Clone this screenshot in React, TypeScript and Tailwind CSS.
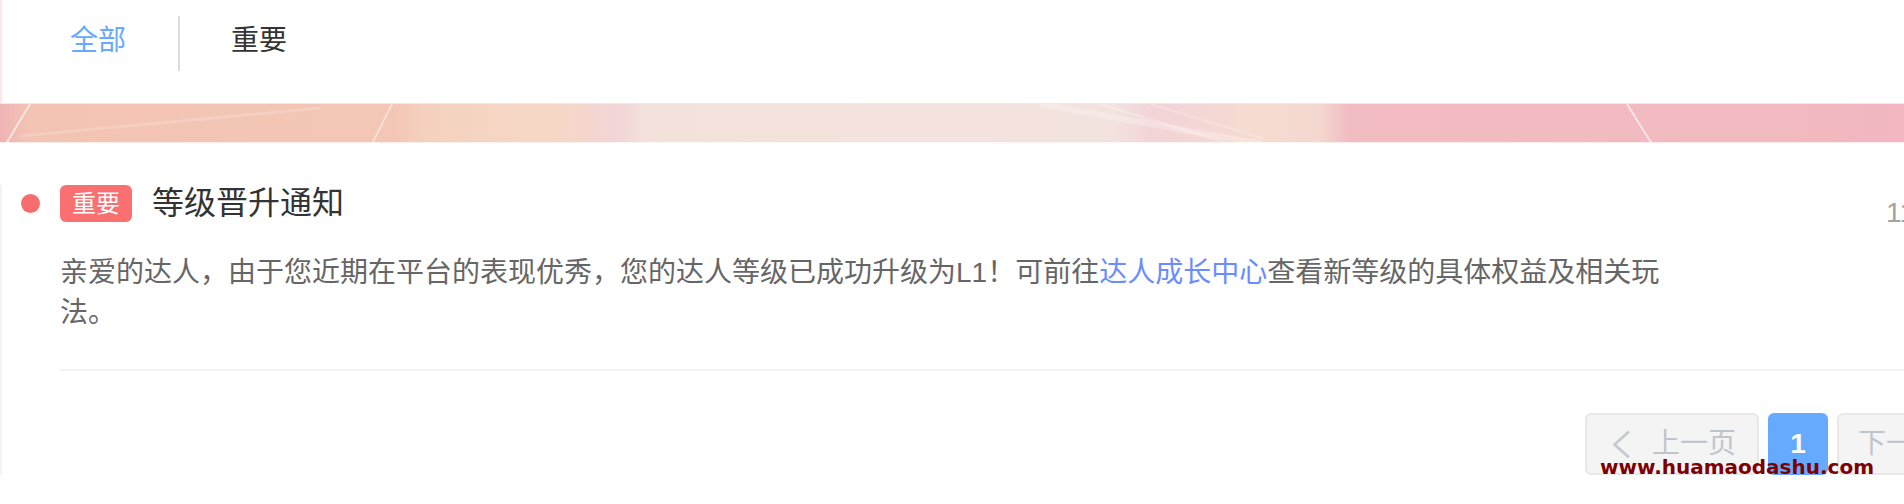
import React from "react";

function Chevron({ dir }: { dir: "left" | "right" }) {
  return (
    <svg width="18" height="27" viewBox="0 0 18 27" fill="none" className="shrink-0">
      {dir === "left" ? (
        <polyline points="16,1.5 2.5,13.5 16,25.5" stroke="#c6c9cf" strokeWidth="3" strokeLinecap="round" strokeLinejoin="round" />
      ) : (
        <polyline points="2,1.5 15.5,13.5 2,25.5" stroke="#c6c9cf" strokeWidth="3" strokeLinecap="round" strokeLinejoin="round" />
      )}
    </svg>
  );
}

function Banner() {
  return (
    <div className="relative h-[40px] w-full overflow-hidden border-t border-[#f9e6e2] bg-[linear-gradient(90deg,#efb4b6_0%,#f3c4b3_1.5%,#f3c6b5_19%,#f5d2c0_21%,#f6d7c6_27%,#f2d6d8_30%,#f3e2dc_31.5%,#f3e3de_54%,#f2d3d8_56%,#f5dcd0_61%,#f4d8d0_64%,#f1bcc2_65.5%,#f1bac0_85%,#f2b3c1_100%)]">
      <svg className="absolute inset-0" width="100%" height="40" viewBox="0 0 2060 40" preserveAspectRatio="none">
        <line x1="30" y1="0" x2="6" y2="40" stroke="#ffffff" strokeOpacity="0.6" strokeWidth="2" />
        <line x1="392" y1="0" x2="372" y2="40" stroke="#ffffff" strokeOpacity="0.45" strokeWidth="2" />
        <line x1="20" y1="32" x2="320" y2="4" stroke="#ffffff" strokeOpacity="0.18" strokeWidth="3" />
        <line x1="1040" y1="0" x2="1262" y2="40" stroke="#ffffff" strokeOpacity="0.25" strokeWidth="6" />
        <line x1="1100" y1="0" x2="1230" y2="40" stroke="#ffffff" strokeOpacity="0.22" strokeWidth="3" />
        <line x1="1150" y1="0" x2="1262" y2="34" stroke="#ffffff" strokeOpacity="0.22" strokeWidth="2" />
        <line x1="1627" y1="0" x2="1652" y2="40" stroke="#ffffff" strokeOpacity="0.6" strokeWidth="2" />
        <line x1="1950" y1="0" x2="1975" y2="40" stroke="#ffffff" strokeOpacity="0.25" strokeWidth="2" />
      </svg>
      <div className="absolute bottom-0 left-0 right-0 h-[1px] bg-white/70" />
    </div>
  );
}

export default function App() {
  return (
    <div className="relative h-[504px] w-[1904px] overflow-hidden bg-white font-['Liberation_Sans','Noto_Sans_CJK_SC',sans-serif]">
      <div className="w-[2060px]">
        {/* Tabs */}
        <div className="h-[103px] border-l-2 border-[#fde6e6]">
          <div className="flex h-[82px] items-center">
            <div className="pl-[68px] pr-[52px] text-[28px] leading-none text-[#66a9ff]">全部</div>
            <div className="mt-[5px] h-[55px] w-[2px] bg-[#dcdcdc]" />
            <div className="pl-[51px] text-[28px] leading-none text-[#333333]">重要</div>
          </div>
        </div>

        <Banner />

        {/* List */}
        <div className="border-l-2 border-[#f3f3f3] pl-[19px]">
          <div className="mt-[42px] flex h-[37px] items-start">
            <div className="flex h-[37px] flex-1 items-center">
              <div className="h-[19px] w-[19px] rounded-full bg-[#f76d6d]" />
              <div className="ml-[20px] flex h-[37px] items-center rounded-[6px] bg-[#fa7070] px-[12px] text-[24px] leading-none text-white">
                重要
              </div>
              <div className="ml-[20px] text-[32px] leading-[37px] text-[#333333]">等级晋升通知</div>
            </div>
            <div className="mt-[9px] w-[174px] whitespace-nowrap text-[28px] leading-[37px] text-[#a3a3a3]">11-08 15:30</div>
          </div>

          <div className="ml-[39px] mt-[31px] text-[28px] leading-[40px] text-[#666666]">
            亲爱的达人，由于您近期在平台的表现优秀，您的达人等级已成功升级为L1！可前往
            <span className="text-[#6b8cff]">达人成长中心</span>
            查看新等级的具体权益及相关玩
            <br />
            法。
          </div>

          <div className="ml-[39px] mt-[36px] h-[2px] bg-[#f2f2f2]" />

          {/* Pagination */}
          <div className="mt-[42px] flex justify-end gap-[9px] pr-[49px]">
            <div className="flex h-[62px] w-[174px] items-center gap-[22px] rounded-[6px] border-2 border-[#e8e8e8] bg-[#f4f4f5] pl-[25px] text-[28px] leading-none text-[#c0c4cc]">
              <Chevron dir="left" />
              <span>上一页</span>
            </div>
            <div className="flex h-[62px] w-[60px] items-center justify-center rounded-[6px] bg-[#66aaff] text-[28px] font-bold leading-none text-white">
              1
            </div>
            <div className="flex h-[62px] w-[174px] items-center gap-[22px] rounded-[6px] border-2 border-[#e8e8e8] bg-[#f4f4f5] pl-[19px] text-[28px] leading-none text-[#c0c4cc]">
              <span>下一页</span>
              <Chevron dir="right" />
            </div>
          </div>
        </div>
      </div>

      {/* Watermark */}
      <div className="absolute left-[1600px] top-[457px] font-['DejaVu_Sans',sans-serif] text-[20px] font-bold leading-[20px] text-[#7d0000]">
        www.huamaodashu.com
      </div>
    </div>
  );
}
